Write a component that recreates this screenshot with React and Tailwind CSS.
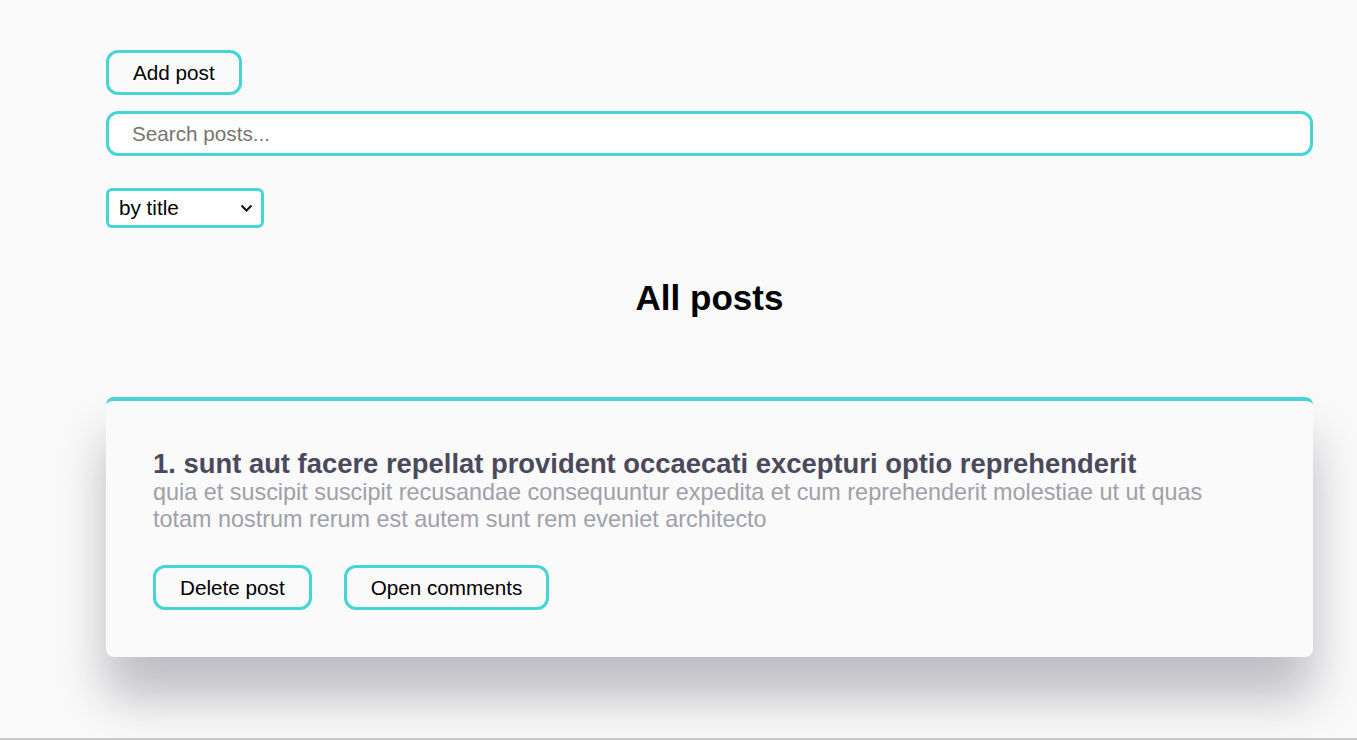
import React, { useState } from 'react';

const posts = [
    {
        id: 1,
        title: 'sunt aut facere repellat provident occaecati excepturi optio reprehenderit',
        body: 'quia et suscipit suscipit recusandae consequuntur expedita et cum reprehenderit molestiae ut ut quas totam nostrum rerum est autem sunt rem eveniet architecto',
    },
];

const TealButton = ({ children, className = '' }) => (
    <button
        className={`border-[3px] border-[#47d4d6] rounded-xl px-6 py-[7.5px] text-[20.7px] leading-[24px] text-black bg-transparent ${className}`}
    >
        {children}
    </button>
);

const App = () => {
    const [query, setQuery] = useState('');
    const [sort, setSort] = useState('title');

    return (
        <div
            className="h-[740px] bg-[#fafafa] border-b-2 border-[#c9c9c9] overflow-hidden"
            style={{ fontFamily: '"Liberation Sans", Arial, sans-serif' }}
        >
            <div className="ml-[106px] w-[1207px] pt-[50px]">
                <TealButton>Add post</TealButton>

                <input
                    value={query}
                    onChange={(e) => setQuery(e.target.value)}
                    placeholder="Search posts..."
                    className="mt-[16px] block w-full h-[45px] border-[3px] border-[#47d4d6] rounded-xl bg-white px-[23px] text-[20.7px] text-black placeholder:text-[#757575] outline-none"
                />

                <div className="relative mt-[32px] w-[158px]">
                    <select
                        value={sort}
                        onChange={(e) => setSort(e.target.value)}
                        className="appearance-none block w-full h-[40px] border-[3px] border-[#47d4d6] rounded-md bg-white pl-[10px] text-[20.7px] text-black outline-none"
                    >
                        <option value="title">by title</option>
                        <option value="body">by description</option>
                    </select>
                    <svg
                        className="absolute right-[11px] top-[16px] pointer-events-none"
                        width="13"
                        height="8"
                        viewBox="0 0 13 8"
                        fill="none"
                    >
                        <path d="M1.5 1.5L6.5 6.5L11.5 1.5" stroke="#111" strokeWidth="2" />
                    </svg>
                </div>

                <h1 className="mt-[50px] text-center text-[35px] leading-[40px] font-bold text-black">
                    All posts
                </h1>

                <div className="mt-[79px]">
                    {posts.map((post) => (
                        <div
                            key={post.id}
                            className="border-t-4 border-[#47d4d6] rounded-lg bg-[#fafafa] pl-[47px] pr-[60px] pt-[47px] pb-[47px] shadow-[0_40px_50px_0_rgba(30,30,50,0.28)]"
                        >
                            <div className="text-[27.4px] leading-[31px] font-bold text-[#4a4a5c]">
                                {post.id}. {post.title}
                            </div>
                            <div className="text-[23.4px] leading-[27px] text-[#a0a0aa]">
                                {post.body}
                            </div>
                            <div className="mt-[32px] flex gap-[32px]">
                                <TealButton>Delete post</TealButton>
                                <TealButton>Open comments</TealButton>
                            </div>
                        </div>
                    ))}
                </div>
            </div>
        </div>
    );
};

export default App;
